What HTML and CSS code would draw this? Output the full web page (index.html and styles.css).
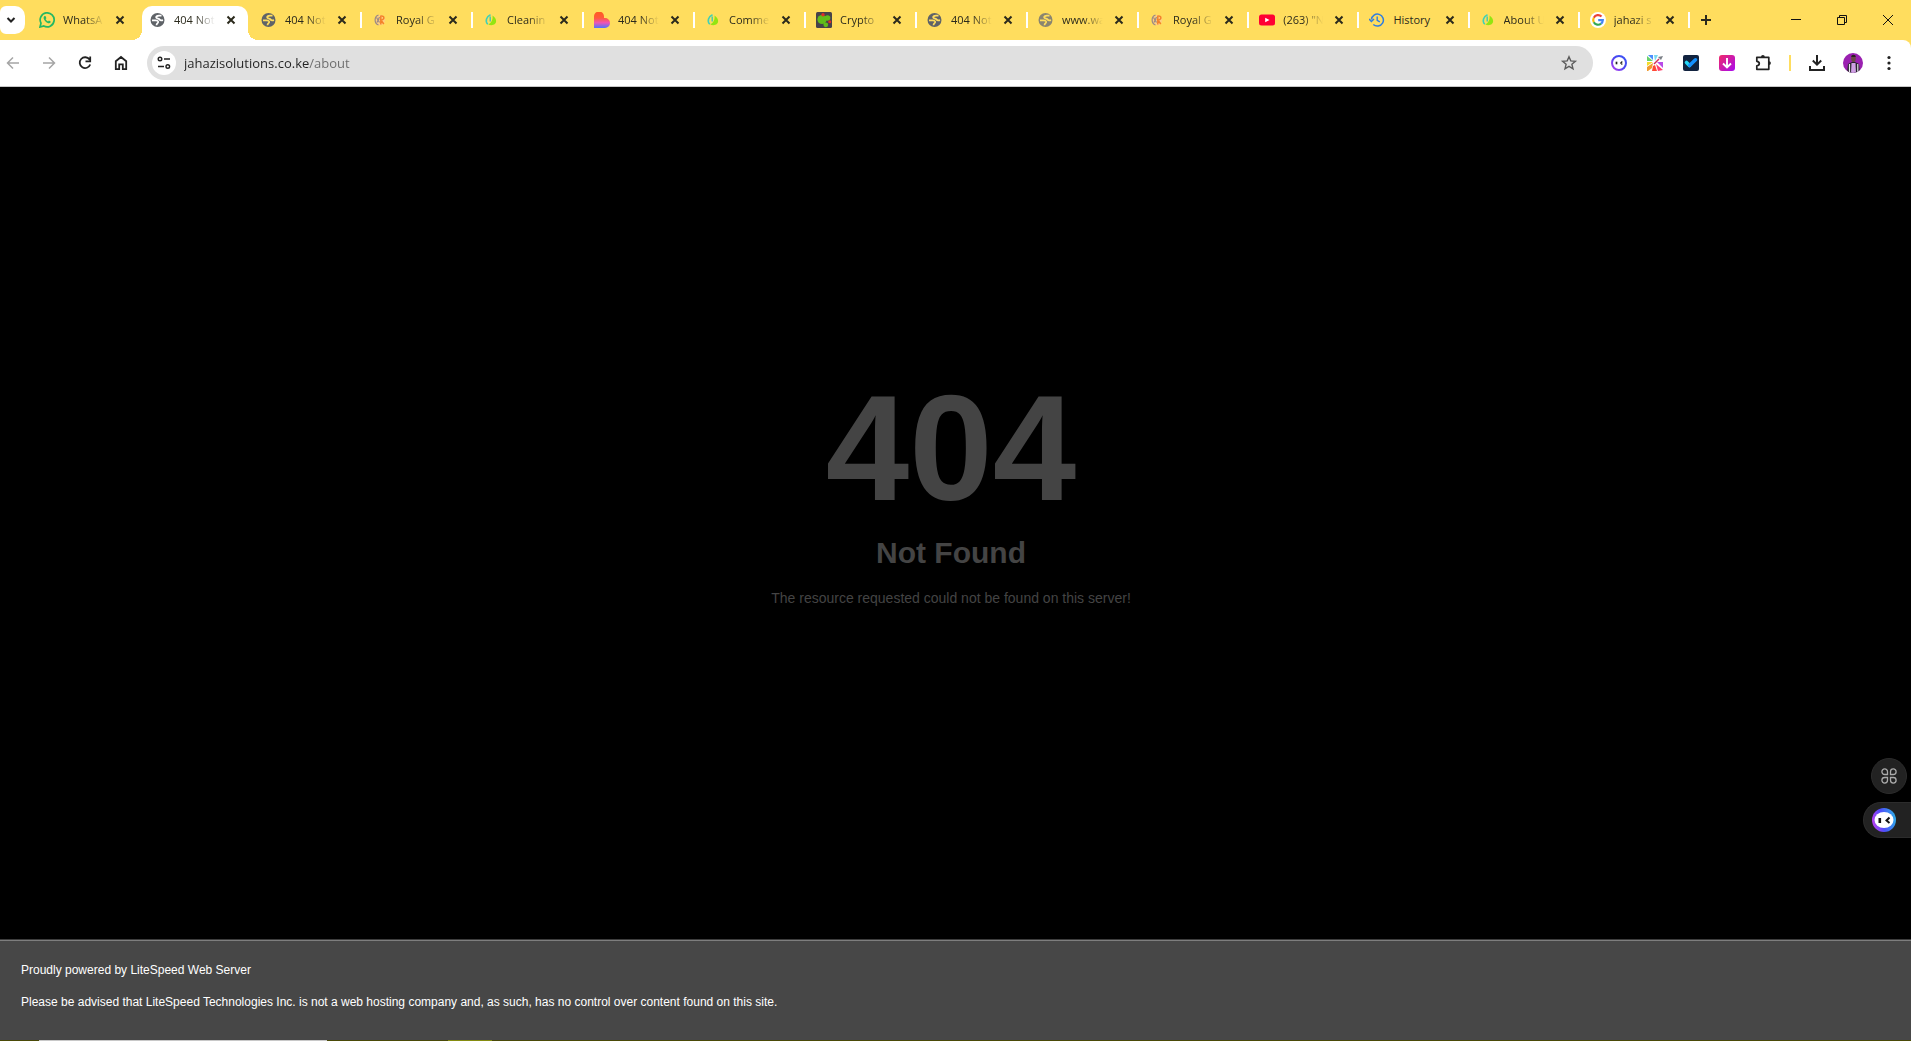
FILE: index.html
```html
<!DOCTYPE html>
<html lang="en">
<head>
<meta charset="utf-8">
<meta name="viewport" content="width=device-width, initial-scale=1">
<title>404 Not Found</title>
<link rel="stylesheet" href="styles.css">
</head>
<body>
<svg class="defs" aria-hidden="true">
  <defs>
    <linearGradient id="lb" x1="0" y1="0" x2="0" y2="1"><stop offset="0" stop-color="#ff5a1f"/><stop offset=".4" stop-color="#ff5a3c"/><stop offset=".68" stop-color="#ee55b5"/><stop offset="1" stop-color="#4b73ff"/></linearGradient>
    <linearGradient id="bot" x1="0" y1="1" x2="1" y2="0"><stop offset="0" stop-color="#b83df0"/><stop offset=".5" stop-color="#4b46ef"/><stop offset="1" stop-color="#3a55f5"/></linearGradient>
    <linearGradient id="dl" x1="0" y1="0" x2="1" y2="1"><stop offset="0" stop-color="#f02a68"/><stop offset="1" stop-color="#a80af0"/></linearGradient>
    <linearGradient id="orb" x1="0" y1=".7" x2="1" y2=".5"><stop offset="0" stop-color="#c03df0"/><stop offset=".45" stop-color="#4d4dfa"/><stop offset="1" stop-color="#2ea8e8"/></linearGradient>
    <clipPath id="face"><circle cx="10" cy="10" r="10"/></clipPath>
  </defs>
  <symbol id="x" viewBox="0 0 16 16"><path d="M4.5 4.5l7 7m0-7l-7 7" stroke="#2b2a1c" stroke-width="2"/></symbol>
  <symbol id="globe" viewBox="0 0 16 16"><circle cx="7.500" cy="8" r="7" fill="currentColor"/><path d="M11.500 3.600H9C7 3.600 5.800 4.600 6.300 5.700S9 6.600 9.600 7.600s2 .9 3.400.5" fill="none" stroke="var(--tab)" stroke-width="1.900"/><path d="M2 8.400h3.500c1.800 0 2.900.7 2.700 1.700S6.500 11.200 6.500 13.300" fill="none" stroke="var(--tab)" stroke-width="1.700"/></symbol>
  <symbol id="royal" viewBox="0 0 16 16"><circle cx="8" cy="8" r="5.200" fill="#ffcf80"/><path d="M6.500 3C2 4.500 2 11.500 6.500 13M4.500 5.500l3 5M7.500 5L5 10.500" fill="none" stroke="#9b8a85" stroke-width="1.200"/><path d="M8.800 12.500V4.200c4-.8 4.200 3.800 0 3.800l3 4" fill="none" stroke="#f4822a" stroke-width="1.500"/></symbol>
  <symbol id="leaf" viewBox="0 0 16 16"><path d="M7.500 2.800C3.500 4.500 1.800 9 4.800 12.200" fill="none" stroke="#3fd0b8" stroke-width="1.600"/><path d="M7.200 4.500v5" stroke="#35c9b0" stroke-width="1.300"/><path d="M9.500 3.500c3.500 2.500 4.800 6 2.500 8.300-1.800 1.800-5 1.900-6.800.4C8.500 11 10 7.500 9.500 3.500z" fill="#93e510"/></symbol>
  <symbol id="whatsapp" viewBox="0 0 16 16"><path d="M1 15l1-3.800A7 7 0 1 1 4.800 14z" fill="none" stroke="#25b863" stroke-width="1.700"/><path d="M5.300 4.300c-1.500 1.500-.2 3.700 1.200 5.100 1.500 1.500 3.700 2.700 5 1.200.4-.5.300-1 .1-1.100L9.900 8.600l-.8.900C8 9.100 7 8.100 6.600 7l.8-.8-.8-1.900c-.3-.4-.9-.4-1.300 0z" fill="#25b863"/></symbol>
  <symbol id="heart" viewBox="0 0 16 16"><path d="M0 16V5a5 5 0 0 1 10-1v2h1a5 5 0 0 1 0 10z" fill="url(#lb)"/></symbol>
  <symbol id="crypto" viewBox="0 0 16 16"><rect width="16" height="16" rx="1.500" fill="#47424a"/><circle cx="6" cy="7.500" r="4.600" fill="#62bd19"/><circle cx="11.500" cy="6" r="2.800" fill="#62bd19"/><circle cx="9.800" cy="12.800" r="2.400" fill="#62bd19"/><circle cx="7" cy="2.800" r="1.700" fill="#e32d26"/><circle cx="13.700" cy="9.800" r="1.500" fill="#e32d26"/></symbol>
  <symbol id="youtube" viewBox="0 0 16 16"><rect y="2.500" width="16" height="11" rx="2.500" fill="#ff0033"/><path d="M6.200 5.700v4.600L10.500 8z" fill="#fff"/></symbol>
  <symbol id="history" viewBox="0 0 16 16"><path d="M2.400 7.500A6 6 0 1 1 4.300 12.500M0 7l2.400 2.500L5 7" fill="none" stroke="#2f7de0" stroke-width="1.500"/><path d="M8.200 4.500V8.300l2.600 1.600" fill="none" stroke="#2f7de0" stroke-width="1.400"/></symbol>
  <symbol id="google" viewBox="0 0 16 16"><circle cx="8" cy="8" r="8" fill="#fff"/><g fill="none" stroke-width="2.200"><path d="M11.500 4.600A4.800 4.800 0 0 0 3.800 5.700" stroke="#ea4335"/><path d="M3.800 5.700a4.800 4.800 0 0 0 0 4.600" stroke="#fbbc05"/><path d="M3.800 10.300a4.800 4.800 0 0 0 7.300 1.300" stroke="#34a853"/><path d="M11.100 11.600A4.800 4.800 0 0 0 12.800 8.200H8.200" stroke="#4285f4"/></g></symbol>
</svg>

<header class="browser">
  <div class="strip">
    <button class="tab-search" aria-label="Search tabs"><svg class="i16" viewBox="0 0 16 16"><path d="M4.500 6L8 9.500 11.500 6" fill="none" stroke="#222" stroke-width="2"/></svg></button>
    <div class="tabs">
      <div class="tab nosep"><button class="pick"><svg class="i16"><use href="#whatsapp"/></svg><span class="name">WhatsA</span></button><button class="close" aria-label="Close"><svg class="i16"><use href="#x"/></svg></button></div>
      <div class="tab nosep active"><button class="pick"><svg class="i16"><use href="#globe"/></svg><span class="name">404 Not</span></button><button class="close" aria-label="Close"><svg class="i16"><use href="#x"/></svg></button></div>
      <div class="tab"><button class="pick"><svg class="i16"><use href="#globe"/></svg><span class="name">404 Not</span></button><button class="close" aria-label="Close"><svg class="i16"><use href="#x"/></svg></button></div>
      <div class="tab"><button class="pick"><svg class="i16"><use href="#royal"/></svg><span class="name">Royal G</span></button><button class="close" aria-label="Close"><svg class="i16"><use href="#x"/></svg></button></div>
      <div class="tab"><button class="pick"><svg class="i16"><use href="#leaf"/></svg><span class="name">Cleanin</span></button><button class="close" aria-label="Close"><svg class="i16"><use href="#x"/></svg></button></div>
      <div class="tab"><button class="pick"><svg class="i16"><use href="#heart"/></svg><span class="name">404 Not</span></button><button class="close" aria-label="Close"><svg class="i16"><use href="#x"/></svg></button></div>
      <div class="tab"><button class="pick"><svg class="i16"><use href="#leaf"/></svg><span class="name">Comme</span></button><button class="close" aria-label="Close"><svg class="i16"><use href="#x"/></svg></button></div>
      <div class="tab"><button class="pick"><svg class="i16"><use href="#crypto"/></svg><span class="name">Crypto</span></button><button class="close" aria-label="Close"><svg class="i16"><use href="#x"/></svg></button></div>
      <div class="tab"><button class="pick"><svg class="i16"><use href="#globe"/></svg><span class="name">404 Not</span></button><button class="close" aria-label="Close"><svg class="i16"><use href="#x"/></svg></button></div>
      <div class="tab idle"><button class="pick"><svg class="i16"><use href="#globe"/></svg><span class="name">www.wa</span></button><button class="close" aria-label="Close"><svg class="i16"><use href="#x"/></svg></button></div>
      <div class="tab"><button class="pick"><svg class="i16"><use href="#royal"/></svg><span class="name">Royal G</span></button><button class="close" aria-label="Close"><svg class="i16"><use href="#x"/></svg></button></div>
      <div class="tab"><button class="pick"><svg class="i16"><use href="#youtube"/></svg><span class="name">(263) "N</span></button><button class="close" aria-label="Close"><svg class="i16"><use href="#x"/></svg></button></div>
      <div class="tab"><button class="pick"><svg class="i16"><use href="#history"/></svg><span class="name whole">History</span></button><button class="close" aria-label="Close"><svg class="i16"><use href="#x"/></svg></button></div>
      <div class="tab"><button class="pick"><svg class="i16"><use href="#leaf"/></svg><span class="name">About U</span></button><button class="close" aria-label="Close"><svg class="i16"><use href="#x"/></svg></button></div>
      <div class="tab"><button class="pick"><svg class="i16"><use href="#google"/></svg><span class="name">jahazi s</span></button><button class="close" aria-label="Close"><svg class="i16"><use href="#x"/></svg></button></div>
    </div>
    <button class="new-tab" aria-label="New tab"><svg class="i16" viewBox="0 0 16 16"><path d="M8 3v10M3 8h10" stroke="#2b2a1c" stroke-width="2"/></svg></button>
    <div class="window">
      <button aria-label="Minimize"><svg class="i16" viewBox="0 0 16 16"><path d="M3 7.500h10" stroke="#111"/></svg></button>
      <button aria-label="Restore"><svg class="i16" viewBox="0 0 16 16"><path d="M3.500 5.500h7v7h-7zM5.500 5.500v-2h7v7h-2" fill="none" stroke="#111"/></svg></button>
      <button aria-label="Close window"><svg class="i16" viewBox="0 0 16 16"><path d="M3 3l10 10M13 3L3 13" stroke="#111"/></svg></button>
    </div>
  </div>

  <div class="toolbar">
    <nav class="nav">
      <button aria-label="Back"><svg class="i16" viewBox="0 0 16 16"><path d="M14 8H3M8 2.500L2.500 8 8 13.500" fill="none" stroke="#a5a5a5" stroke-width="1.500"/></svg></button>
      <button aria-label="Forward"><svg class="i16" viewBox="0 0 16 16"><path d="M2 8h11M8 2.500L13.500 8 8 13.500" fill="none" stroke="#a5a5a5" stroke-width="1.500"/></svg></button>
      <button aria-label="Reload"><svg class="i16" viewBox="0 0 16 16"><path d="M12.500 4.500A5.400 5.400 0 1 0 13.200 9.500M13.200 1.500v4.800H8.500" fill="none" stroke="#222" stroke-width="1.800"/></svg></button>
      <button aria-label="Home"><svg class="i16" viewBox="0 0 16 16"><path d="M2.800 14.200V6.200L8 2l5.200 4.200v8H9.800V9.300H6.200v4.900z" fill="none" stroke="#222" stroke-width="1.800"/></svg></button>
    </nav>
    <form class="omnibox">
      <button type="button" class="site" aria-label="Site information"><svg class="i16" viewBox="0 0 16 16"><path d="M8 4h6M2 11.500h6" stroke="#222" stroke-width="1.700"/><circle cx="4" cy="4" r="1.800" fill="none" stroke="#222" stroke-width="1.400"/><circle cx="11.800" cy="11.500" r="1.800" fill="none" stroke="#222" stroke-width="1.400"/></svg></button>
      <input class="url" type="text" aria-label="Address" value="jahazisolutions.co.ke/about">
      <button type="button" class="star" aria-label="Bookmark"><svg class="i16" viewBox="0 0 16 16"><path d="M8 1.700l1.800 4.200 4.600.4-3.500 3 1.100 4.500L8 11.400l-4 2.400 1.100-4.500-3.500-3 4.600-.4z" fill="none" stroke="#5c5c5c" stroke-width="1.400"/></svg></button>
    </form>
    <div class="tools">
      <button aria-label="Assistant"><svg class="i16" viewBox="0 0 16 16"><circle cx="8" cy="8" r="7" fill="#fff" stroke="url(#bot)" stroke-width="2"/><path d="M5.500 6.700v2.600" stroke="#222" stroke-width="1.700"/><path d="M11.300 6.500L9.800 8l1.500 1.500" fill="none" stroke="#222" stroke-width="1.200"/></svg></button>
      <button aria-label="Colour picker"><svg class="i16" viewBox="0 0 16 16"><path d="M0 1l6 5H0z" fill="#67d16d"/><path d="M1 0h5v5z" fill="#4c8dff"/><path d="M7 0h4L8 6z" fill="#7ad9ee"/><path d="M0 7h6l-6 4z" fill="#f4dc28"/><path d="M0 12l6-4-1 5-4 3H0z" fill="#f29a2e"/><path d="M6 11l2-1 2 6H5z" fill="#ff4a35"/><path d="M9 9l7 6-5 1z" fill="#ff3f6d"/><path d="M10 7h6v6z" fill="#b84be8"/><path d="M7 9l5-5" stroke="#d32c55" stroke-width="1.500"/><path d="M11 2l3 3 2-4z" fill="#7a7f86"/></svg></button>
      <button aria-label="Tasks"><svg class="i16" viewBox="0 0 16 16"><rect width="16" height="16" rx="2" fill="#12233f"/><path d="M3.500 7.500l3 3" stroke="#25d8f5" stroke-width="3.600" stroke-linecap="round"/><path d="M6.800 10.300l5.700-5.500" stroke="#1591ff" stroke-width="3.600" stroke-linecap="round"/></svg></button>
      <button aria-label="Downloader"><svg class="i16" viewBox="0 0 16 16"><rect width="16" height="16" rx="3" fill="url(#dl)"/><path d="M8 3v9M4 8.500l4 4 4-4" fill="none" stroke="#fff" stroke-width="1.900"/></svg></button>
      <button aria-label="Extensions"><svg class="i16" viewBox="0 0 16 16"><path d="M1.800 2.300h12v12h-12v-3.500c3.300-.3 3.300-4.200 0-4.500z" fill="none" stroke="#222" stroke-width="1.700" stroke-linejoin="round"/><path d="M6 2a1.900 1.900 0 0 1 3.800 0zM14 6.200a1.900 1.900 0 0 1 0 3.800z" fill="#222"/></svg></button>
    </div>
    <div class="rule"></div>
    <div class="tools">
      <button aria-label="Downloads"><svg class="i16" viewBox="0 0 16 16"><path d="M8 0v9M3.800 5.500L8 9.700l4.200-4.200M1 11v4h14v-4" fill="none" stroke="#222" stroke-width="2"/></svg></button>
      <button aria-label="Profile"><svg class="i20" viewBox="0 0 20 20"><g clip-path="url(#face)"><rect width="20" height="20" fill="#9a20b0"/><path d="M4 20l1-9 4-2h3l4 2 1 9z" fill="#28242c"/><path d="M8.500 10h4l.5 10H8z" fill="#cfa0e4"/><path d="M6.500 11v8M14.800 11v8" stroke="#e8e4ee" stroke-width="1.200"/><ellipse cx="10.500" cy="5.500" rx="2.300" ry="3.600" fill="#6b4a45"/><path d="M8.200 4a2.300 2.300 0 0 1 4.600 0z" fill="#2a2022"/></g></svg></button>
      <button aria-label="Menu"><svg class="i16" viewBox="0 0 16 16"><g fill="#222"><circle cx="8" cy="2.500" r="1.600"/><circle cx="8" cy="8" r="1.600"/><circle cx="8" cy="13.500" r="1.600"/></g></svg></button>
    </div>
  </div>
</header>

<main class="page">
  <h1>404</h1>
  <h2>Not Found</h2>
  <p>The resource requested could not be found on this server!</p>
</main>

<footer class="footer">
  <p>Proudly powered by LiteSpeed Web Server</p>
  <p>Please be advised that LiteSpeed Technologies Inc. is not a web hosting company and, as such, has no control over content found on this site.</p>
</footer>
<div class="taskbar"><span class="start"></span><span class="search"></span><span class="pins"></span><span class="current"></span></div>

<aside class="float">
  <button class="apps" aria-label="Apps"><svg class="i16" viewBox="0 0 16 16"><path d="M6.500 6.500H3.700a2.800 2.800 0 1 1 2.800-2.800zM9.500 6.500V3.700a2.800 2.800 0 1 1 2.800 2.800zM6.500 9.500v2.800a2.800 2.800 0 1 1-2.800-2.800zM9.500 9.500h2.800a2.800 2.800 0 1 1-2.800 2.800z" fill="none" stroke="#aaa" stroke-width="1.300"/></svg></button>
  <button class="chat" aria-label="Open assistant"><svg class="i24" viewBox="0 0 24 24"><circle cx="12" cy="12" r="12" fill="url(#orb)"/><ellipse cx="12" cy="12" rx="9.500" ry="8" fill="#fff"/><path d="M7.800 10v5" stroke="#111" stroke-width="2.600"/><path d="M17.500 9.500l-3 3 3 2.500" fill="none" stroke="#111" stroke-width="2"/></svg></button>
</aside>
</body>
</html>
```

FILE: styles.css
```css
* { box-sizing: border-box; }

body {
  margin: 0;
  min-height: 100vh;
  display: flex;
  flex-direction: column;
  background: #000;
  color: #444;
  font: 14px/20px "Liberation Sans", Arial, sans-serif;
}

button {
  display: flex;
  align-items: center;
  justify-content: center;
  padding: 0;
  border: 0;
  background: none;
  font: inherit;
  color: inherit;
}

svg { flex: none; overflow: visible; }
.defs { position: absolute; width: 0; height: 0; }
.i16 { width: 16px; height: 16px; }
.i20 { width: 20px; height: 20px; }
.i24 { width: 24px; height: 24px; }

/* Browser chrome */
.browser {
  background: #ffdd5e;
  font-family: "Open Sans", "Noto Sans", sans-serif;
}

.strip { display: flex; align-items: center; height: 40px; }

.tab-search {
  width: 25px;
  height: 28px;
  margin-right: 4px;
  padding-right: 3px;
  border-radius: 6px 10px 10px 6px;
  background: #fff;
}

.tabs { display: flex; flex: 1; min-width: 0; max-width: 1661px; height: 40px; }

.tab {
  --tab: #ffdd5e;
  position: relative;
  display: flex;
  flex: 111 1 0;
  align-items: center;
  min-width: 0;
  padding: 0 12px 0 10px;
  color: #2b2a1c;
}
.tab:nth-child(n + 11) { flex-grow: 110; }

.tab::after {
  content: "";
  position: absolute;
  right: 0;
  top: 12px;
  width: 2px;
  height: 16px;
  background: #fff;
}
.tab.nosep::after { display: none; }

.tab.active { --tab: #fff; z-index: 0; }
.tab.active::before {
  content: "";
  position: absolute;
  z-index: -1;
  inset: 6px 3px 0 2px;
  border-radius: 10px 10px 0 0;
  background: #fff;
}
.tab.active::after {
  display: block;
  z-index: -1;
  top: 30px;
  right: -7px;
  left: -8px;
  width: auto;
  height: 10px;
  background:
    radial-gradient(circle at 0 0, transparent 10px, #fff 10px) left / 10px 10px no-repeat,
    radial-gradient(circle at 100% 0, transparent 10px, #fff 10px) right / 10px 10px no-repeat;
}

.pick { flex: 1; min-width: 0; gap: 8px; justify-content: flex-start; color: #5f6368; }
.idle .pick { color: #8a8570; }

.name {
  flex: 1;
  min-width: 0;
  overflow: hidden;
  white-space: nowrap;
  text-align: left;
  color: #2b2a1c;
  font-size: 11px;
  line-height: 20px;
  mask-image: linear-gradient(to right, #000 calc(100% - 20px), transparent);
}
.name.whole { mask-image: none; }
.close { width: 16px; height: 16px; margin-left: 8px; }

.new-tab { width: 32px; height: 28px; }
.window { display: flex; margin-left: auto; }
.window button { width: 46px; height: 40px; }

.toolbar {
  display: flex;
  align-items: center;
  height: 47px;
  padding-right: 4px;
  border-bottom: 1px solid #c8c8c8;
  border-radius: 0 8px 0 0;
  background: #fff;
}
.nav, .tools { display: flex; }
.nav { margin-left: -5px; }
.nav button, .tools button { width: 36px; height: 34px; }

.omnibox {
  display: flex;
  flex: 1;
  align-items: center;
  height: 34px;
  margin: 0 8px;
  padding: 0 16px 0 5px;
  border-radius: 17px;
  background: #e0e0e0;
}
.site { width: 24px; height: 24px; border-radius: 50%; background: #fff; }
.url {
  flex: 1;
  min-width: 0;
  height: 24px;
  margin-left: 8px;
  padding: 0;
  border: 0;
  outline: 0;
  background: linear-gradient(to right, #222 125px, #6a6a6a 125px);
  background-clip: text;
  color: transparent;
  font: 13px/24px "Open Sans", "Noto Sans", sans-serif;
}
.rule { width: 2px; height: 16px; margin: 0 8px; background: #ffdd5e; }

/* Error page */
.page {
  flex: 1;
  padding: calc((100vh - 87px) * 0.3) 9px 40px 0;
  text-align: center;
}
.page h1 { margin: 0; font-size: 150px; line-height: 150px; }
.page h2 { margin: 20px 0 25px; font-size: 30px; line-height: 20px; }
.page p { margin: 0; }

.footer {
  min-height: 101px;
  padding: 20px 30px 0 21px;
  border-top: 1px solid #3d3d3d;
  box-shadow: inset 0 1px 0 #7e7e7e;
  background: #474747;
  color: #fff;
  font-size: 12px;
}
.footer p { margin: 0 0 12px; }

.taskbar { display: flex; height: 1px; background: #4a4a08; }
.start { width: 39px; }
.search { width: 288px; background: #c8c8c8; }
.pins { width: 121px; }
.current { width: 44px; background: #858c10; }

/* Floating assistant buttons */
.float {
  position: fixed;
  right: 0;
  bottom: 203px;
  display: flex;
  flex-direction: column;
  align-items: flex-end;
  gap: 8px;
}
.float button { height: 36px; border: 1px solid #2c2c2c; background: #222; }
.apps { width: 36px; margin-right: 4px; border-radius: 50%; }
.float .chat {
  width: 48px;
  padding-left: 8px;
  justify-content: flex-start;
  border-right: 0;
  border-radius: 18px 0 0 18px;
}
```
